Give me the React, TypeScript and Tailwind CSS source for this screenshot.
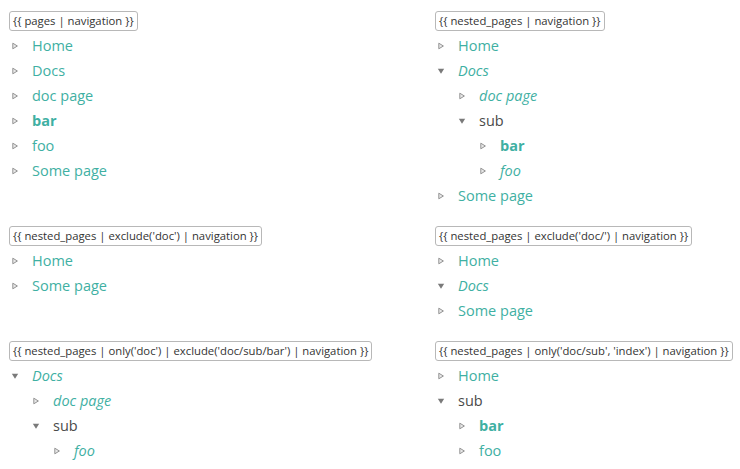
type Item = {
  label: string;
  depth: number;
  open?: boolean;
  italic?: boolean;
  bold?: boolean;
  plain?: boolean;
};

type Section = { code: string; items: Item[] };

const left: Section[] = [
  {
    code: "{{ pages | navigation }}",
    items: [
      { label: "Home", depth: 0 },
      { label: "Docs", depth: 0 },
      { label: "doc page", depth: 0 },
      { label: "bar", depth: 0, bold: true },
      { label: "foo", depth: 0 },
      { label: "Some page", depth: 0 },
    ],
  },
  {
    code: "{{ nested_pages | exclude('doc') | navigation }}",
    items: [
      { label: "Home", depth: 0 },
      { label: "Some page", depth: 0 },
    ],
  },
  {
    code: "{{ nested_pages | only('doc') | exclude('doc/sub/bar') | navigation }}",
    items: [
      { label: "Docs", depth: 0, open: true, italic: true },
      { label: "doc page", depth: 1, italic: true },
      { label: "sub", depth: 1, open: true, plain: true },
      { label: "foo", depth: 2, italic: true },
    ],
  },
];

const right: Section[] = [
  {
    code: "{{ nested_pages | navigation }}",
    items: [
      { label: "Home", depth: 0 },
      { label: "Docs", depth: 0, open: true, italic: true },
      { label: "doc page", depth: 1, italic: true },
      { label: "sub", depth: 1, open: true, plain: true },
      { label: "bar", depth: 2, bold: true },
      { label: "foo", depth: 2, italic: true },
      { label: "Some page", depth: 0 },
    ],
  },
  {
    code: "{{ nested_pages | exclude('doc/') | navigation }}",
    items: [
      { label: "Home", depth: 0 },
      { label: "Docs", depth: 0, open: true, italic: true },
      { label: "Some page", depth: 0 },
    ],
  },
  {
    code: "{{ nested_pages | only('doc/sub', 'index') | navigation }}",
    items: [
      { label: "Home", depth: 0 },
      { label: "sub", depth: 0, open: true, plain: true },
      { label: "bar", depth: 1, bold: true },
      { label: "foo", depth: 1 },
    ],
  },
];

// small triangle markers like the tree toggles
function Toggle({ open }: { open?: boolean }) {
  if (open) {
    return (
      <svg width="8" height="8" viewBox="0 0 8 8" className="shrink-0">
        <path d="M0.8 1.8 L7.2 1.8 L4 6.8 Z" fill="#7a7a7a" />
      </svg>
    );
  }
  return (
    <svg width="8" height="8" viewBox="0 0 8 8" className="shrink-0">
      <path d="M1.8 1.2 L6.4 4 L1.8 6.8 Z" fill="#e8e8e8" stroke="#939393" strokeWidth="1" strokeLinejoin="round" />
    </svg>
  );
}

function NavRow({ item }: { item: Item }) {
  const indent = ["pl-[2px]", "pl-[23px]", "pl-[44px]"][item.depth];
  return (
    <div className={`flex items-center h-[25px] ${indent}`}>
      <Toggle open={item.open} />
      <span
        className={`ml-[13px] pt-[2px] text-[14.5px] leading-none ${
          item.plain ? "text-[#4a4a4a]" : "text-[#3fb0a3]"
        } ${item.italic ? "italic" : ""} ${item.bold ? "font-bold" : ""}`}
      >
        {item.label}
      </span>
    </div>
  );
}

function CodeBox({ code }: { code: string }) {
  return (
    <div className="inline-flex items-center h-[20px] px-[3px] border border-[#b8b8b8] rounded-[3px] text-[11.3px] text-[#333] bg-white whitespace-nowrap">
      {code}
    </div>
  );
}

function Column({ sections }: { sections: Section[] }) {
  return (
    <div className="flex flex-col">
      {sections.map((s, i) => (
        <div key={i} className="flex flex-col items-start mb-[18px]">
          <CodeBox code={s.code} />
          <div className="mt-[2px] w-full">
            {s.items.map((it, j) => (
              <NavRow key={j} item={it} />
            ))}
          </div>
        </div>
      ))}
    </div>
  );
}

export default function App() {
  // pair sections row by row so both columns line up
  return (
    <div
      className="w-[740px] min-h-[469px] bg-white pt-[11px] pl-[9px]"
      style={{ fontFamily: '"Open Sans", "Noto Sans", sans-serif' }}
    >
      <div className="grid grid-cols-[426px_1fr]">
        {left.map((s, i) => (
          <div key={i} className="contents">
            <Column sections={[s]} />
            <Column sections={[right[i]]} />
          </div>
        ))}
      </div>
    </div>
  );
}
